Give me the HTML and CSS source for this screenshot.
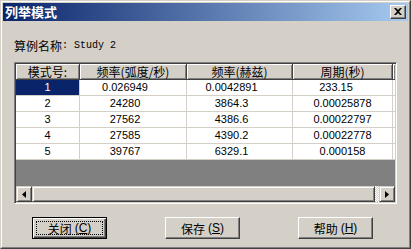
FILE: index.html
```html
<html>
<head>
	<title>列举模式</title>
	<link rel="stylesheet" href="styles.css">
</head>
<body>
	<div class="window">
		<div class="window_inner">
			<div class="titlebar">
				<span class="title">列举模式</span>
				<span class="close_button"><svg width="8" height="7" viewBox="0 0 8 7"><path d="M0 0h2l2 2 2-2h2L5 3.5 8 7H6L4 5 2 7H0l3-3.5z" fill="#000"/></svg></span>
			</div>
			<div class="content">
				<div class="case_name"><span class="cjk">算例名称</span><span class="mono">: Study 2</span></div>
				<div class="listview">
					<div class="grid">
						<div class="head">模式号:</div>
						<div class="head">频率(弧度/秒)</div>
						<div class="head">频率(赫兹)</div>
						<div class="head">周期(秒)</div>
						<div class="head head_end"></div>

						<div class="cell c1 selected">1</div>
						<div class="cell c2">0.026949</div>
						<div class="cell c3">0.0042891</div>
						<div class="cell c4 shift">233.15</div>
						<div class="cell end"></div>

						<div class="cell c1">2</div>
						<div class="cell c2">24280</div>
						<div class="cell c3">3864.3</div>
						<div class="cell c4">0.00025878</div>
						<div class="cell end"></div>

						<div class="cell c1">3</div>
						<div class="cell c2">27562</div>
						<div class="cell c3">4386.6</div>
						<div class="cell c4">0.00022797</div>
						<div class="cell end"></div>

						<div class="cell c1">4</div>
						<div class="cell c2">27585</div>
						<div class="cell c3">4390.2</div>
						<div class="cell c4">0.00022778</div>
						<div class="cell end"></div>

						<div class="cell c1">5</div>
						<div class="cell c2">39767</div>
						<div class="cell c3">6329.1</div>
						<div class="cell c4">0.000158</div>
						<div class="cell end"></div>
					</div>
					<div class="empty_area"></div>
					<div class="hscroll">
						<span class="arrow_button"><svg width="4" height="7" viewBox="0 0 4 7"><path d="M4 0v7L0 3.5z" fill="#000"/></svg></span>
						<span class="thumb"></span>
						<span class="track"></span>
						<span class="arrow_button"><svg width="4" height="7" viewBox="0 0 4 7"><path d="M0 0v7l4-3.5z" fill="#000"/></svg></span>
					</div>
				</div>
				<div class="buttons">
					<div class="button default"><span class="focus">关闭<span class="paren">(<u>C</u>)</span></span></div>
					<div class="button">保存<span class="paren">(<u>S</u>)</span></div>
					<div class="button">帮助<span class="paren">(<u>H</u>)</span></div>
				</div>
			</div>
		</div>
	</div>
</body>
</html>
```

FILE: styles.css
```css
* {
	box-sizing: border-box;
}

body {
	margin: 0;
	background-color: #d4d0c8;
	color: #000;
	font-family: "Liberation Sans", "Noto Sans CJK SC", sans-serif;
	font-size: 11px;
}

.window {
	width: 411px;
	height: 249px;
	border: 1px solid;
	border-color: #d4d0c8 #404040 #404040 #d4d0c8;
}
.window_inner {
	height: 100%;
	border: 1px solid;
	border-color: #fff #808080 #808080 #fff;
	padding: 1px;
	display: flex;
	flex-direction: column;
}

.titlebar {
	height: 18px;
	background: linear-gradient(to right, #0a246a, #a6caf0);
	display: flex;
	align-items: center;
	justify-content: space-between;
	padding: 0 2px 0 2px;
}
.title {
	color: #fff;
	font: bold 13px "Noto Sans CJK SC", sans-serif;
	line-height: 18px;
}
.close_button {
	width: 16px;
	height: 14px;
	background-color: #d4d0c8;
	border: 1px solid;
	border-color: #fff #404040 #404040 #fff;
	box-shadow: inset -1px -1px #808080;
	display: flex;
	align-items: center;
	justify-content: center;
	padding-bottom: 1px;
}

.content {
	padding: 0 0 0 11px;
}

.case_name {
	margin-top: 17px;
	height: 14px;
	line-height: 14px;
	display: flex;
	align-items: center;
}
.cjk {
	font: 12px "Noto Sans CJK SC", sans-serif;
}
.mono {
	font: 10px "Liberation Mono", monospace;
}

.listview {
	margin-top: 10px;
	width: 383px;
	height: 142px;
	border: 1px solid;
	border-color: #808080 #fff #fff #808080;
	box-shadow: inset 1px 1px #404040, inset -1px -1px #d4d0c8;
	padding: 1px;
	display: flex;
	flex-direction: column;
}

.grid {
	display: grid;
	grid-template-columns: 64px 107px 106px 100px 1fr;
	grid-auto-rows: 16px;
	background-color: #fff;
}
.head {
	background-color: #d4d0c8;
	border-right: 1px solid #404040;
	border-bottom: 1px solid #404040;
	box-shadow: inset 1px 1px #fff, inset -1px -1px #808080;
	font: 12px "Noto Sans CJK SC", sans-serif;
	line-height: 15px;
	text-align: center;
	white-space: nowrap;
	overflow: hidden;
}
.head_end {
	border-right: none;
}
.cell {
	border-right: 1px solid #d4d0c8;
	border-bottom: 1px solid #d4d0c8;
	line-height: 15px;
	text-align: center;
	white-space: nowrap;
}
.c2, .c3 {
	padding-right: 16px;
}
.shift {
	padding-right: 13px;
}
.end {
	border-right: none;
}
.selected {
	background-color: #0a246a;
	color: #fff;
}

.empty_area {
	flex: 1;
	background-color: #808080;
}

.hscroll {
	height: 16px;
	display: flex;
	background: repeating-conic-gradient(#fff 0 25%, #d4d0c8 0 50%) 0 0 / 2px 2px;
}
.arrow_button, .thumb {
	height: 16px;
	background-color: #d4d0c8;
	border: 1px solid;
	border-color: #d4d0c8 #404040 #404040 #d4d0c8;
	box-shadow: inset 1px 1px #fff, inset -1px -1px #808080;
}
.arrow_button {
	width: 16px;
	display: flex;
	align-items: center;
	justify-content: center;
}
.thumb {
	flex: 1;
}
.track {
	width: 4px;
}

.buttons {
	margin-top: 13px;
	padding-left: 18px;
	display: flex;
	gap: 58px;
}
.button {
	width: 75px;
	height: 22px;
	border: 1px solid;
	border-color: #fff #404040 #404040 #fff;
	box-shadow: inset -1px -1px #808080;
	display: flex;
	align-items: center;
	justify-content: center;
	font: 12px "Noto Sans CJK SC", sans-serif;
}
.button.default {
	border-color: #000;
	box-shadow: inset 1px 1px #fff, inset -1px -1px #404040, inset -2px -2px #808080;
	padding: 3px;
}
.focus {
	flex: 1;
	align-self: stretch;
	border: 1px dotted #000;
	display: flex;
	align-items: center;
	justify-content: center;
}
.paren {
	font: 12px "Liberation Sans", sans-serif;
	margin-left: 3px;
}
```
